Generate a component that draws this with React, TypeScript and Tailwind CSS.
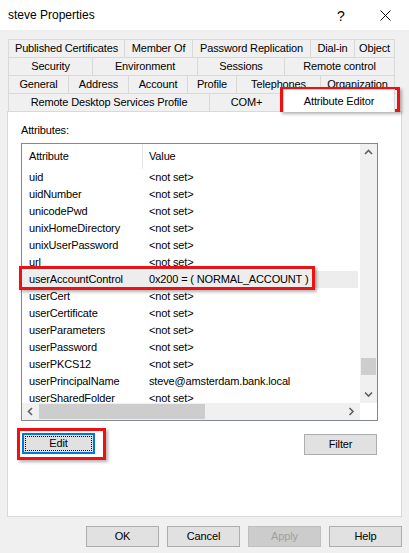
import React from 'react';

const tabRows: { label: string; w: number }[][] = [
    [
        { label: 'Published Certificates', w: 116 },
        { label: 'Member Of', w: 68 },
        { label: 'Password Replication', w: 118 },
        { label: 'Dial-in', w: 44 },
        { label: 'Object', w: 41 },
    ],
    [
        { label: 'Security', w: 84 },
        { label: 'Environment', w: 105 },
        { label: 'Sessions', w: 87 },
        { label: 'Remote control', w: 111 },
    ],
    [
        { label: 'General', w: 60 },
        { label: 'Address', w: 60 },
        { label: 'Account', w: 59 },
        { label: 'Profile', w: 49 },
        { label: 'Telephones', w: 84 },
        { label: 'Organization', w: 75 },
    ],
];

const attributes = [
    ['uid', '<not set>'],
    ['uidNumber', '<not set>'],
    ['unicodePwd', '<not set>'],
    ['unixHomeDirectory', '<not set>'],
    ['unixUserPassword', '<not set>'],
    ['url', '<not set>'],
    ['userAccountControl', '0x200 = ( NORMAL_ACCOUNT )'],
    ['userCert', '<not set>'],
    ['userCertificate', '<not set>'],
    ['userParameters', '<not set>'],
    ['userPassword', '<not set>'],
    ['userPKCS12', '<not set>'],
    ['userPrincipalName', 'steve@amsterdam.bank.local'],
    ['userSharedFolder', '<not set>'],
];

function Chevron({ dir }: { dir: 'up' | 'down' | 'left' | 'right' }) {
    const d = {
        up: 'M1 5 L4.5 1.5 L8 5',
        down: 'M1 1.5 L4.5 5 L8 1.5',
        left: 'M5 1 L1.5 4.5 L5 8',
        right: 'M1.5 1 L5 4.5 L1.5 8',
    }[dir];
    const horiz = dir === 'up' || dir === 'down';
    return (
        <svg width={horiz ? 9 : 7} height={horiz ? 7 : 9} viewBox={horiz ? '0 0 9 7' : '0 0 7 9'}>
            <path d={d} fill="none" stroke="#606060" strokeWidth="1.6" />
        </svg>
    );
}

function Button({ label, disabled, focused }: { label: string; disabled?: boolean; focused?: boolean }) {
    if (focused) {
        return (
            <div className="w-[73px] h-[21px] border-2 border-[#0078d7] bg-[#e1e1e1] p-px">
                <div className="w-full h-full border border-dotted border-black flex items-center justify-center text-black">
                    {label}
                </div>
            </div>
        );
    }
    return (
        <div
            className={
                disabled
                    ? 'w-[73px] h-[21px] border border-[#bfbfbf] bg-[#cccccc] text-[#a0a0a0] flex items-center justify-center'
                    : 'w-[73px] h-[21px] border border-[#adadad] bg-[#e1e1e1] text-black flex items-center justify-center'
            }
        >
            {label}
        </div>
    );
}

export default function App() {
    const redBox = 'absolute border-[3px] border-[#ee1111] shadow-[2px_2px_3px_rgba(0,0,0,0.3)] pointer-events-none';

    return (
        <div
            className="relative w-[409px] h-[553px] bg-[#f0f0f0] overflow-hidden text-[11px] text-black tracking-[-0.15px]"
            style={{ fontFamily: '"Liberation Sans", Arial, sans-serif' }}
        >
            {/* Title bar */}
            <div className="h-[30px] bg-white flex items-center pl-[8px] relative">
                <span className="text-[12px] tracking-normal">steve Properties</span>
                <span className="absolute left-[337px] top-[6px] text-[14px]">?</span>
                <svg className="absolute left-[380px] top-[10px]" width="11" height="11" viewBox="0 0 11 11">
                    <path d="M0.5 0.5 L10.5 10.5 M10.5 0.5 L0.5 10.5" stroke="#111" strokeWidth="1" />
                </svg>
            </div>

            {/* Tabs */}
            <div className="pt-[9px] pl-[8px]">
                {tabRows.map((row, r) => (
                    <div key={r} className="flex h-[18px]">
                        {row.map((t, i) => (
                            <div
                                key={t.label}
                                style={{ width: t.w }}
                                className={
                                    'h-[18px] border-t border-l border-[#d9d9d9] flex items-center justify-center whitespace-nowrap' +
                                    (i === row.length - 1 ? ' border-r' : '')
                                }
                            >
                                {t.label}
                            </div>
                        ))}
                    </div>
                ))}
                <div className="flex h-[18px]">
                    <div className="w-[201px] h-[18px] border-t border-l border-[#d9d9d9] flex items-center justify-center whitespace-nowrap">
                        Remote Desktop Services Profile
                    </div>
                    <div className="w-[74px] h-[18px] border-t border-l border-[#d9d9d9] flex items-center justify-center">
                        COM+
                    </div>
                    <div className="relative z-10 w-[112px] h-[23px] -mt-[4px] bg-white border-t border-l border-r border-[#d9d9d9] flex items-center justify-center whitespace-nowrap">
                        Attribute Editor
                    </div>
                </div>
            </div>

            {/* Panel */}
            <div className="ml-[7px] w-[395px] h-[406px] bg-white border border-[#d9d9d9] pl-[13px] pt-[10px]">
                <div className="h-[16px] leading-[16px]">Attributes:</div>
                <div className="mt-[5px] w-[357px] h-[278px] border border-[#828790] flex flex-col">
                    <div className="flex h-[259px]">
                        <div className="w-[338px] overflow-hidden">
                            <div className="flex h-[25px] items-center">
                                <div className="w-[121px] h-full border-r border-[#e5e5e5] pl-[7px] flex items-center">Attribute</div>
                                <div className="pl-[6px]">Value</div>
                            </div>
                            {attributes.map(([name, value]) => (
                                <div
                                    key={name}
                                    className={
                                        'flex h-[17px] items-center whitespace-nowrap' +
                                        (name === 'userAccountControl' ? ' bg-[#ededed] w-[336px]' : '')
                                    }
                                >
                                    <div className="w-[121px] pl-[7px]">{name}</div>
                                    <div className="pl-[6px]">{value}</div>
                                </div>
                            ))}
                        </div>
                        <div className="w-[17px] bg-[#f0f0f0] flex flex-col items-center">
                            <div className="h-[17px] flex items-center justify-center">
                                <Chevron dir="up" />
                            </div>
                            <div className="flex-1 w-full flex flex-col justify-end px-px">
                                <div className="h-[17px] bg-[#cdcdcd] mb-[11px]" />
                            </div>
                            <div className="h-[17px] flex items-center justify-center">
                                <Chevron dir="down" />
                            </div>
                        </div>
                    </div>
                    <div className="flex h-[17px]">
                        <div className="w-[338px] bg-[#f0f0f0] flex items-center">
                            <div className="w-[17px] flex justify-center">
                                <Chevron dir="left" />
                            </div>
                            <div className="w-[166px] h-[15px] bg-[#cdcdcd]" />
                            <div className="flex-1" />
                            <div className="w-[17px] flex justify-center">
                                <Chevron dir="right" />
                            </div>
                        </div>
                        <div className="w-[17px] bg-white" />
                    </div>
                </div>
                <div className="mt-[12px] w-[357px] px-px flex justify-between items-start">
                    <Button label="Edit" focused />
                    <div className="mt-px">
                        <Button label="Filter" />
                    </div>
                </div>
            </div>

            {/* Dialog buttons */}
            <div className="mt-[9px] pr-[7px] flex justify-end gap-[8px]">
                <Button label="OK" />
                <Button label="Cancel" />
                <Button label="Apply" disabled />
                <Button label="Help" />
            </div>

            {/* Annotation boxes */}
            <div className={redBox + ' left-[280px] top-[87px] w-[120px] h-[25px]'} />
            <div className={redBox + ' left-[19px] top-[266px] w-[296px] h-[24px]'} />
            <div className={redBox + ' left-[17px] top-[428px] w-[89px] h-[32px]'} />
        </div>
    );
}
